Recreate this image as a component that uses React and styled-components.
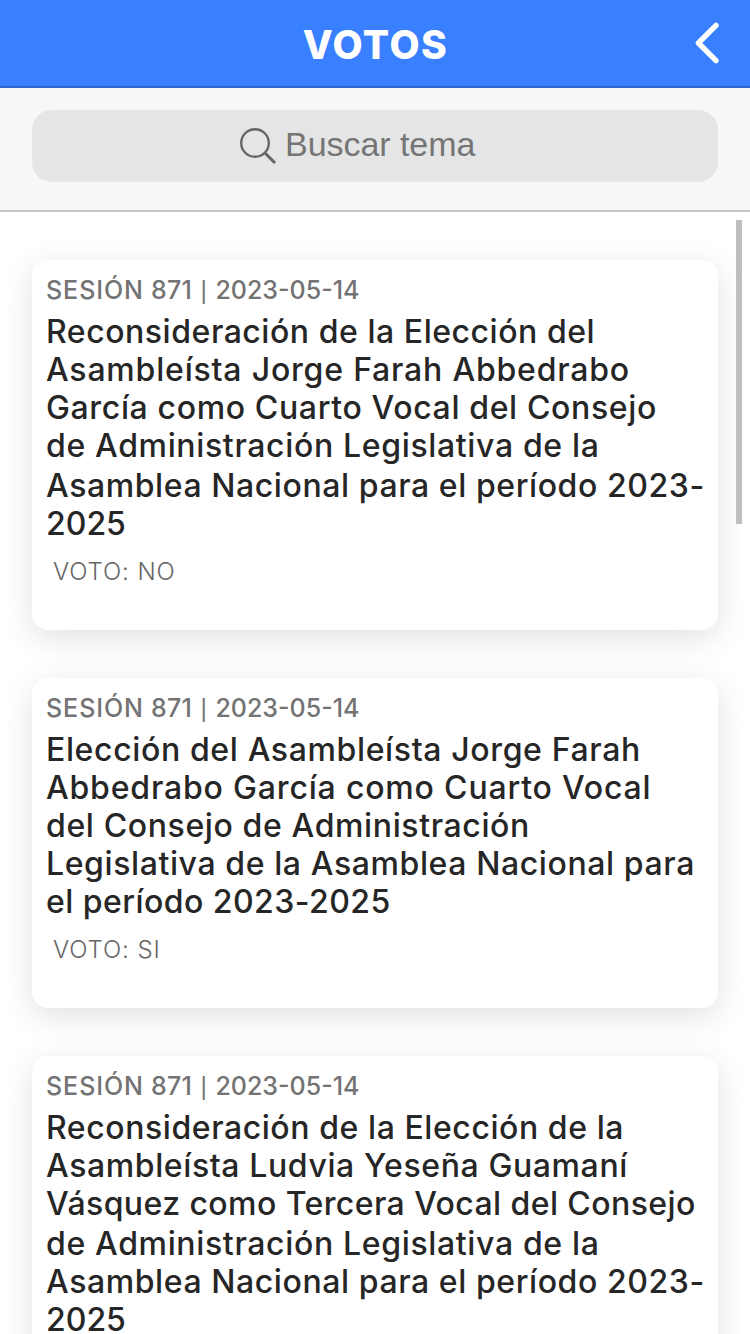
import React from "react";
import styled, { createGlobalStyle } from "styled-components";

const GlobalStyle = createGlobalStyle`
  * { box-sizing: border-box; }
  html, body { margin: 0; height: 100%; overflow: hidden; background: #fff; }
  body { font-family: Inter, "Noto Sans", sans-serif; }
`;

const Page = styled.div`
  position: relative;
  display: flex;
  flex-direction: column;
  width: 750px;
  height: 1334px;
  overflow: hidden;
  background: #fff;
`;

const Toolbar = styled.header`
  display: grid;
  grid-template-columns: 88px 1fr 88px;
  align-items: center;
  flex: none;
  height: 88px;
  background: #3880ff;
  border-bottom: 2px solid #2d66cc;
`;

const ToolbarTitle = styled.h1`
  grid-column: 2;
  margin: 0;
  padding: 3px 0 0 1px;
  text-align: center;
  white-space: nowrap;
  font-size: 39px;
  font-weight: 800;
  line-height: 48px;
  letter-spacing: 1.5px;
  color: #fff;
`;

const BackButton = styled.button`
  justify-self: end;
  display: flex;
  margin: 0 31px 0 0;
  padding: 0;
  border: 0;
  background: none;
`;

const SearchBar = styled.div`
  flex: none;
  height: 124px;
  padding: 22px 32px 0;
  background: #f7f7f7;
  border-bottom: 2px solid #c4c4c4;
`;

const SearchField = styled.label`
  display: flex;
  align-items: center;
  height: 72px;
  padding-left: 207px;
  border-radius: 20px;
  background: #e5e5e5;
`;

const Placeholder = styled.span`
  margin: -5px 0 0 8px;
  font-family: "Liberation Sans", Arial, sans-serif;
  font-size: 34px;
  line-height: 40px;
  letter-spacing: -0.05px;
  color: #757575;
`;

const List = styled.main`
  display: flex;
  flex-direction: column;
  flex: 1;
  gap: 48px;
  min-height: 0;
  padding: 48px 32px 0;
  overflow: hidden;
`;

const Card = styled.article`
  flex: none;
  height: ${(p) => p.$height}px;
  padding: 14px 14px 0;
  border-radius: 16px;
  background: #fff;
  box-shadow: 0 8px 32px rgba(0, 0, 0, 0.12);
`;

const Session = styled.div`
  white-space: nowrap;
  font-size: 25px;
  font-weight: 500;
  line-height: 32px;
  letter-spacing: 0.3px;
  color: #737373;
`;

const SessionLabel = styled.span`
  letter-spacing: 0.95px;
`;

const Divider = styled.span`
  margin: 0 1px;
  font-size: 20px;
  line-height: 20px;
`;

const SessionDate = styled.span`
  letter-spacing: 0;
`;

const Topic = styled.h2`
  margin: 7px 0 0;
  font-size: 32px;
  font-weight: 500;
  line-height: 38px;
  color: #262626;
`;

const TopicLine = styled.span`
  display: block;
  white-space: nowrap;
  letter-spacing: ${(p) => p.$spacing || 0}px;
  margin-top: ${(p) => p.$gap || 0}px;
`;

const Vote = styled.p`
  margin: 14px 0 0 7px;
  font-size: 24px;
  font-weight: 300;
  line-height: 30px;
  letter-spacing: 0.9px;
  color: #666;
`;

const ScrollThumb = styled.div`
  position: absolute;
  top: 220px;
  right: 8px;
  width: 6px;
  height: 304px;
  background: #bfbfbf;
`;

const votes = [
  {
    height: 370,
    vote: "NO",
    lines: [
      ["Reconsideración de la Elección del", 0.54],
      ["Asambleísta Jorge Farah Abbedrabo", 0.8],
      ["García como Cuarto Vocal del Consejo", 0.64],
      ["de Administración Legislativa de la", 0.65],
      ["Asamblea Nacional para el período 2023-", 0.58, 2],
      ["2025", 0],
    ],
  },
  {
    height: 330,
    vote: "SI",
    lines: [
      ["Elección del Asambleísta Jorge Farah", 0.63],
      ["Abbedrabo García como Cuarto Vocal", 0.82],
      ["del Consejo de Administración", 0.62],
      ["Legislativa de la Asamblea Nacional para", 0.6],
      ["el período 2023-2025", 0.45],
    ],
  },
  {
    height: 370,
    lines: [
      ["Reconsideración de la Elección de la", 0.57],
      ["Asambleísta Ludvia Yeseña Guamaní", 0.6],
      ["Vásquez como Tercera Vocal del Consejo", 0.42],
      ["de Administración Legislativa de la", 0.65, 2],
      ["Asamblea Nacional para el período 2023-", 0.58],
      ["2025", 0],
    ],
  },
];

function VoteCard({ height, vote, lines }) {
  return (
    <Card $height={height}>
      <Session>
        <SessionLabel>SESIÓN</SessionLabel> 871 <Divider>|</Divider>{" "}
        <SessionDate>2023-05-14</SessionDate>
      </Session>
      <Topic>
        {lines.map(([text, spacing, gap]) => (
          <TopicLine key={text} $spacing={spacing} $gap={gap}>
            {text}
          </TopicLine>
        ))}
      </Topic>
      {vote && <Vote>VOTO: {vote}</Vote>}
    </Card>
  );
}

export default function App() {
  return (
    <Page>
      <GlobalStyle />
      <Toolbar>
        <ToolbarTitle>VOTOS</ToolbarTitle>
        <BackButton aria-label="Volver">
          <svg width="26" height="42" viewBox="0 0 26 42" fill="none" stroke="#fff" strokeWidth="5.4" strokeLinecap="round" strokeLinejoin="round">
            <path d="M23 3.4 L5.4 21 L23 38.6" />
          </svg>
        </BackButton>
      </Toolbar>
      <SearchBar>
        <SearchField>
          <svg width="38" height="38" viewBox="0 0 38 38" fill="none" stroke="#666" strokeWidth="2.4">
            <circle cx="16" cy="16" r="13.8" />
            <path d="M25.5 25.5 L36 36" strokeWidth="3" />
          </svg>
          <Placeholder>Buscar tema</Placeholder>
        </SearchField>
      </SearchBar>
      <List>
        {votes.map((item, i) => (
          <VoteCard key={i} {...item} />
        ))}
      </List>
      <ScrollThumb />
    </Page>
  );
}
